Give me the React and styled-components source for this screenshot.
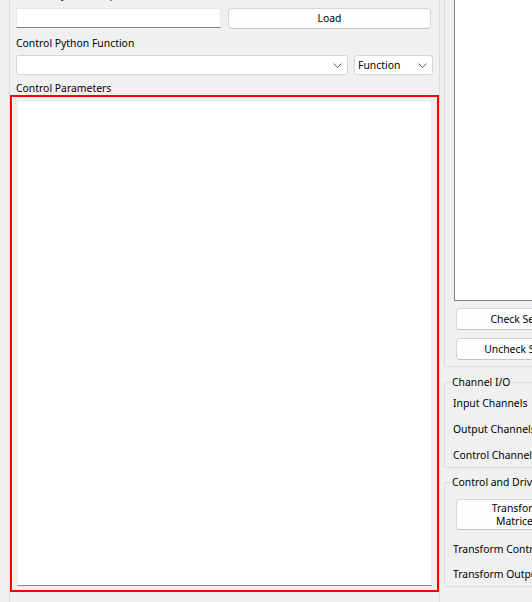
import React from "react";
import styled, { createGlobalStyle } from "styled-components";

const GlobalStyle = createGlobalStyle`
  html, body {
    margin: 0;
    padding: 0;
    background: #f0f0f0;
    overflow: hidden;
  }
  * { box-sizing: border-box; }
`;

const Window = styled.div`
  display: flex;
  width: 532px;
  height: 602px;
  overflow: hidden;
  background: #f0f0f0;
  font-family: "Noto Sans", "Open Sans", sans-serif;
  font-size: 10.4px;
  color: #000;
`;

const LeftGroup = styled.div`
  flex: none;
  margin-left: 9px;
  width: 431px;
  height: 640px;
  border-left: 1px solid #dcdcdc;
  border-right: 1px solid #dcdcdc;
  padding: 0 7px 0 6px;
  display: flex;
  flex-direction: column;
`;

const Label = styled.div`
  height: 14px;
  line-height: 14px;
  white-space: nowrap;
  margin-top: ${(p) => p.$mt || 0}px;
`;

const Row = styled.div`
  display: flex;
  align-items: flex-start;
  gap: ${(p) => p.$gap}px;
  margin-top: ${(p) => p.$mt || 0}px;
`;

const LineEdit = styled.div`
  width: 205px;
  height: 20px;
  background: #fff;
  border: 1px solid #e8e8e8;
  border-bottom: 1px solid #808080;
  border-radius: 2px 2px 0 0;
`;

const Button = styled.button`
  flex: none;
  width: ${(p) => p.$w}px;
  height: ${(p) => p.$h || 21}px;
  margin-left: ${(p) => p.$ml || 0}px;
  background: #fdfdfd;
  border: 1px solid #d4d4d4;
  border-bottom-color: #c4c4c4;
  border-radius: 4px;
  font: inherit;
  color: #000;
  padding: 0;
  line-height: 13px;
  text-align: center;
`;

const Combo = styled.div`
  flex: none;
  width: ${(p) => p.$w}px;
  height: 20px;
  background: #fff;
  border: 1px solid #d5d5d5;
  border-radius: 3px;
  display: flex;
  align-items: center;
  justify-content: space-between;
  padding: 0 5px 0 3px;
  line-height: 14px;
`;

const Chevron = () => (
  <svg width="9" height="5" viewBox="0 0 9 5">
    <path d="M0.5 0.5 L4.5 4.5 L8.5 0.5" fill="none" stroke="#5f5f5f" strokeWidth="1" />
  </svg>
);

const Highlight = styled.div`
  margin: 0 -7px 0 -6px;
  height: 497px;
  border: 2px solid #ff0000;
  padding: 4px 5px;
  display: flex;
`;

const ParamArea = styled.div`
  flex: 1;
  background: #fff;
  border-left: 1px solid #ececec;
  border-right: 1px solid #ececec;
  border-bottom: 1px solid #868686;
`;

const RightPanel = styled.div`
  flex: none;
  width: 200px;
  margin-left: 4px;
  display: flex;
  flex-direction: column;
`;

const TopGroup = styled.div`
  height: 367px;
  border-left: 1px solid #dcdcdc;
  border-bottom: 1px solid #dcdcdc;
  padding: 0 0 0 9px;
  display: flex;
  flex-direction: column;
`;

const ListBox = styled.div`
  height: 301px;
  background: #fff;
  border-left: 1px solid #828282;
  border-bottom: 1px solid #828282;
  margin-bottom: 7px;
`;

const ButtonStack = styled.div`
  display: flex;
  flex-direction: column;
  gap: 8px;
`;

const Group = styled.fieldset`
  margin: ${(p) => p.$mt}px 0 0 0;
  padding: ${(p) => p.$pt}px 0 2px 8px;
  border: 1px solid #dcdcdc;
  border-radius: 2px;
  display: flex;
  flex-direction: column;
  min-width: 0;
`;

const Legend = styled.legend`
  margin-left: -2px;
  padding: 0 1px;
  height: 14px;
  line-height: 14px;
  white-space: nowrap;
`;

const FieldRow = styled.div`
  height: 20px;
  line-height: 20px;
  white-space: nowrap;
  margin-top: ${(p) => p.$mt || 0}px;
`;

export default function App() {
  return (
    <>
      <GlobalStyle />
      <Window>
        <LeftGroup>
          <Label $mt={-13}>Control Python Script</Label>
          <Row $gap={7} $mt={7}>
            <LineEdit />
            <Button $w={203}>Load</Button>
          </Row>
          <Label $mt={7}>Control Python Function</Label>
          <Row $gap={6} $mt={5}>
            <Combo $w={332}>
              <span />
              <Chevron />
            </Combo>
            <Combo $w={79}>
              <span>Function</span>
              <Chevron />
            </Combo>
          </Row>
          <Label $mt={6}>Control Parameters</Label>
          <Highlight>
            <ParamArea />
          </Highlight>
        </LeftGroup>
        <RightPanel>
          <TopGroup>
            <ListBox />
            <ButtonStack>
              <Button $w={142} $h={22} $ml={2}>Check Selected</Button>
              <Button $w={142} $h={22} $ml={2}>Uncheck Selected</Button>
            </ButtonStack>
          </TopGroup>
          <Group $mt={8} $pt={4}>
            <Legend>Channel I/O</Legend>
            <FieldRow>Input Channels</FieldRow>
            <FieldRow $mt={6}>Output Channels</FieldRow>
            <FieldRow $mt={6}>Control Channels</FieldRow>
          </Group>
          <Group $mt={7} $pt={10}>
            <Legend>Control and Drive</Legend>
            <Button $w={122} $h={31} $ml={3}>
              Transform
              <br />
              Matrices
            </Button>
            <FieldRow $mt={9}>Transform Control</FieldRow>
            <FieldRow $mt={5}>Transform Output</FieldRow>
          </Group>
        </RightPanel>
      </Window>
    </>
  );
}
